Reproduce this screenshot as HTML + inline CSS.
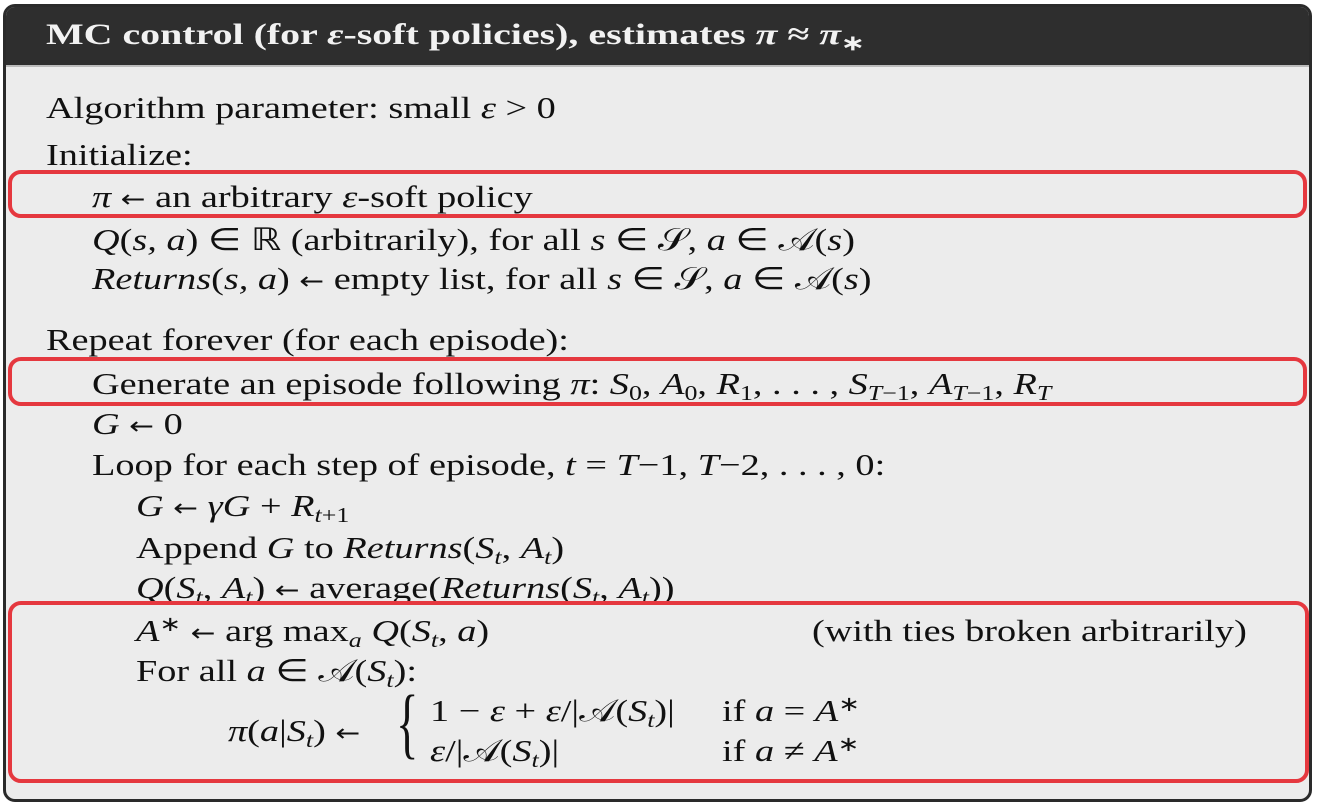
<!DOCTYPE html>
<html><head><style>
html,body{margin:0;padding:0;background:#fff;width:1318px;height:805px;overflow:hidden}
.box{position:absolute;left:3px;top:4px;width:1303px;height:792px;border:3px solid #2a2a2a;border-radius:12px;background:#ececec;overflow:hidden}
.hd{position:absolute;left:0;top:0;right:0;height:58px;background:#2e2e2e;border-bottom:2px solid #bbb}
.t{position:absolute;font-family:"Liberation Serif",serif;font-size:31px;color:#111;white-space:nowrap;line-height:1;transform:scaleX(1.235);transform-origin:left}
.hd .t{color:#f2f2f2;left:40px;top:13px;font-size:30px;font-weight:bold;transform:scaleX(1.33)}
i{font-style:italic}
sub{font-size:21px;vertical-align:-6px;line-height:0}
sup{font-size:21px;vertical-align:10px;line-height:0}
.a{font-family:"DejaVu Sans",sans-serif;font-size:24px}
.r{position:absolute;border:4px solid #e5383f;border-radius:13px}
</style></head><body>
<div class="box">
<div class="hd"><div class="t">MC control (for <i>ε</i>-soft policies), estimates <i>π</i> ≈ <i>π</i><sub>∗</sub></div></div>
<div class="t" style="left:40px;top:85px">Algorithm parameter: small <i>ε</i> &gt; 0</div>
<div class="t" style="left:40px;top:132px">Initialize:</div>
<div class="t" style="left:86px;top:174px"><i>π</i> <span class="a">←</span> an arbitrary <i>ε</i>-soft policy</div>
<div class="t" style="left:86px;top:217px"><i>Q</i>(<i>s, a</i>) ∈ ℝ (arbitrarily), for all <i>s</i> ∈ 𝒮, <i>a</i> ∈ 𝒜(<i>s</i>)</div>
<div class="t" style="left:86px;top:256px"><i>Returns</i>(<i>s, a</i>) <span class="a">←</span> empty list, for all <i>s</i> ∈ 𝒮, <i>a</i> ∈ 𝒜(<i>s</i>)</div>
<div class="t" style="left:40px;top:317px">Repeat forever (for each episode):</div>
<div class="t" style="left:86px;top:361px">Generate an episode following <i>π</i>: <i>S</i><sub>0</sub>, <i>A</i><sub>0</sub>, <i>R</i><sub>1</sub>, . . . , <i>S</i><sub><i>T</i>−1</sub>, <i>A</i><sub><i>T</i>−1</sub>, <i>R</i><sub><i>T</i></sub></div>
<div class="t" style="left:86px;top:401px"><i>G</i> <span class="a">←</span> 0</div>
<div class="t" style="left:86px;top:442px">Loop for each step of episode, <i>t</i> = <i>T</i>−1, <i>T</i>−2, . . . , 0:</div>
<div class="t" style="left:130px;top:483px"><i>G</i> <span class="a">←</span> <i>γG</i> + <i>R</i><sub><i>t</i>+1</sub></div>
<div class="t" style="left:130px;top:525px">Append <i>G</i> to <i>Returns</i>(<i>S</i><sub><i>t</i></sub>, <i>A</i><sub><i>t</i></sub>)</div>
<div class="t" style="left:130px;top:565px"><i>Q</i>(<i>S</i><sub><i>t</i></sub>, <i>A</i><sub><i>t</i></sub>) <span class="a">←</span> average(<i>Returns</i>(<i>S</i><sub><i>t</i></sub>, <i>A</i><sub><i>t</i></sub>))</div>
<div class="t" style="left:130px;top:608px"><i>A</i><sup>∗</sup> <span class="a">←</span> arg max<sub><i>a</i></sub> <i>Q</i>(<i>S</i><sub><i>t</i></sub>, <i>a</i>)</div>
<div class="t" style="left:806px;top:608px">(with ties broken arbitrarily)</div>
<div class="t" style="left:130px;top:648px">For all <i>a</i> ∈ 𝒜(<i>S</i><sub><i>t</i></sub>):</div>
<div class="t" style="left:222px;top:708px"><i>π</i>(<i>a</i>|<i>S</i><sub><i>t</i></sub>) <span class="a">←</span></div>
<div class="t" style="left:390px;top:677px;font-size:78px;transform:scaleX(0.6)">{</div>
<div class="t" style="left:424px;top:688px">1 − <i>ε</i> + <i>ε</i>/|𝒜(<i>S</i><sub><i>t</i></sub>)|</div>
<div class="t" style="left:424px;top:728px"><i>ε</i>/|𝒜(<i>S</i><sub><i>t</i></sub>)|</div>
<div class="t" style="left:716px;top:688px">if <i>a</i> = <i>A</i><sup>∗</sup></div>
<div class="t" style="left:716px;top:728px">if <i>a</i> ≠ <i>A</i><sup>∗</sup></div>
</div>
<div class="r" style="left:8px;top:170px;width:1291px;height:40px"></div>
<div class="r" style="left:8px;top:357px;width:1291px;height:41px"></div>
<div class="r" style="left:8px;top:601px;width:1293px;height:174px"></div>
</body></html>
